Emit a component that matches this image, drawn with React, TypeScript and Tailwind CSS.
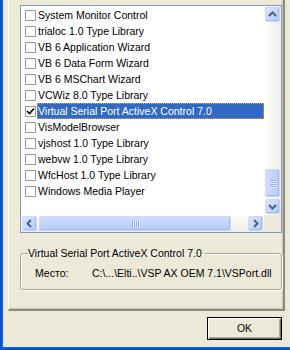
import React from 'react';

const items = [
  'System Monitor Control',
  'trialoc 1.0 Type Library',
  'VB 6 Application Wizard',
  'VB 6 Data Form Wizard',
  'VB 6 MSChart Wizard',
  'VCWiz 8.0 Type Library',
  'Virtual Serial Port ActiveX Control 7.0',
  'VisModelBrowser',
  'vjshost 1.0 Type Library',
  'webvw 1.0 Type Library',
  'WfcHost 1.0 Type Library',
  'Windows Media Player',
];

const arrows: Record<string, string> = {
  up: '1,6 4.5,2.5 8,6',
  down: '1,3 4.5,6.5 8,3',
  left: '6,1 2.5,4.5 6,8',
  right: '3,1 6.5,4.5 3,8',
};

const ScrollBtn = ({ dir }: { dir: 'up' | 'down' | 'left' | 'right' }) => (
  <div className="w-[17px] h-[17px] p-[1px] shrink-0">
    <div className="w-full h-full rounded-[2px] border border-[#C9D8FC] bg-gradient-to-br from-[#DCE6FE] to-[#B6C9F6] shadow-[inset_-1px_-1px_0_#A4BAF0] flex items-center justify-center">
      <svg width="9" height="9" viewBox="0 0 9 9">
        <polyline points={arrows[dir]} fill="none" stroke="#4D6185" strokeWidth="2" />
      </svg>
    </div>
  </div>
);

const Grip = ({ vertical }: { vertical?: boolean }) => (
  <div className={vertical ? 'flex flex-col gap-[1px]' : 'flex gap-[1px]'}>
    {[0, 1, 2, 3].map((i) => (
      <div
        key={i}
        className={vertical ? 'w-[6px] h-[1px] bg-[#8EADF3] shadow-[0_1px_0_#EEF3FE]' : 'w-[1px] h-[6px] bg-[#8EADF3] shadow-[1px_0_0_#EEF3FE]'}
      />
    ))}
  </div>
);

const CheckBox = ({ checked }: { checked?: boolean }) => (
  <div className="w-[11px] h-[11px] shrink-0 border border-[#9C9C9C] bg-white flex items-center justify-center">
    {checked && (
      <svg width="9" height="9" viewBox="0 0 9 9">
        <polyline points="1,4 3.5,6.5 8,1.5" fill="none" stroke="#000" strokeWidth="1.6" />
      </svg>
    )}
  </div>
);

export default function App() {
  return (
    <div className="w-[290px] h-[350px] flex bg-[#ECE9D8] text-[10.5px] leading-[13px] text-black overflow-hidden" style={{ fontFamily: '"Liberation Sans", Arial, sans-serif' }}>
      {/* window frame left */}
      <div className="w-[3px] h-full bg-gradient-to-r from-[#0046D5] to-[#166AEE]" />

      <div className="flex-1 flex flex-col">
        <div className="flex-1 flex flex-col">
          {/* tab page */}
          <div className="ml-[5px] w-[277px] h-[311px] border-l border-white border-r-2 border-b-2 border-r-[#8E8B7E] border-b-[#8E8B7E] shadow-[inset_-1px_-1px_0_#C9C6B7] pl-[11px] pt-[5px]">
            {/* list view */}
            <div className="w-[262px] h-[228px] border border-[#7F9DB9] bg-white grid grid-cols-[1fr_17px] grid-rows-[1fr_17px]">
              <div className="pt-[1px] overflow-hidden">
                {items.map((label, i) => {
                  const sel = i === 6;
                  return (
                    <div key={label} className="h-[16px] flex items-center pl-[4px]">
                      <CheckBox checked={sel} />
                      <div className={`ml-[1px] flex-1 h-[16px] flex items-center pl-[1px] whitespace-nowrap ${sel ? 'bg-[#316AC5] text-white outline outline-1 outline-dotted outline-[#D9A83C] -outline-offset-1' : ''}`}>
                        {label}
                      </div>
                    </div>
                  );
                })}
              </div>

              {/* vertical scrollbar */}
              <div className="flex flex-col bg-gradient-to-r from-[#FEFEFB] to-[#EEEDE5]">
                <ScrollBtn dir="up" />
                <div className="flex-1 flex flex-col justify-end">
                  <div className="h-[30px] p-[1px]">
                    <div className="w-full h-full rounded-[2px] border border-[#C9D8FC] bg-gradient-to-r from-[#CFDCFD] to-[#B8CBF8] shadow-[inset_-1px_-1px_0_#A4BAF0] flex items-center justify-center">
                      <Grip vertical />
                    </div>
                  </div>
                </div>
                <ScrollBtn dir="down" />
              </div>

              {/* horizontal scrollbar */}
              <div className="flex bg-gradient-to-b from-[#FEFEFB] to-[#EEEDE5]">
                <ScrollBtn dir="left" />
                <div className="w-[194px] h-[17px] p-[1px]">
                  <div className="w-full h-full rounded-[2px] border border-[#C9D8FC] bg-gradient-to-b from-[#CFDCFD] to-[#B8CBF8] shadow-[inset_-1px_-1px_0_#A4BAF0] flex items-center justify-center">
                    <Grip />
                  </div>
                </div>
                <div className="flex-1" />
                <ScrollBtn dir="right" />
              </div>
              <div className="bg-[#ECE9D8]" />
            </div>

            {/* group box */}
            <fieldset className="mt-[14px] w-[262px] border border-[#ACA899] rounded-[3px] shadow-[inset_1px_1px_0_#fff,1px_1px_0_#fff] pl-[7px] pt-[7px] pb-[9px]">
              <legend className="pr-[2px] whitespace-nowrap">Virtual Serial Port ActiveX Control 7.0</legend>
              <div className="flex ml-[7px] whitespace-nowrap">
                <span className="w-[57px]">Место:</span>
                <span>{'C:\\...\\Elti..\\VSP AX OEM 7.1\\VSPort.dll'}</span>
              </div>
            </fieldset>
          </div>

          <div className="flex justify-end pr-[8px] mt-[6px]">
            <button className="w-[75px] h-[23px] border border-black bg-[#ECE9D8] shadow-[inset_1px_1px_0_#fff,inset_-1px_-1px_0_#716F64,inset_-2px_-2px_0_#ACA899] flex items-center justify-center">
              OK
            </button>
          </div>
        </div>

        {/* window frame bottom */}
        <div className="h-[3px] bg-gradient-to-b from-[#166AEE] to-[#0046D5]" />
      </div>
    </div>
  );
}
